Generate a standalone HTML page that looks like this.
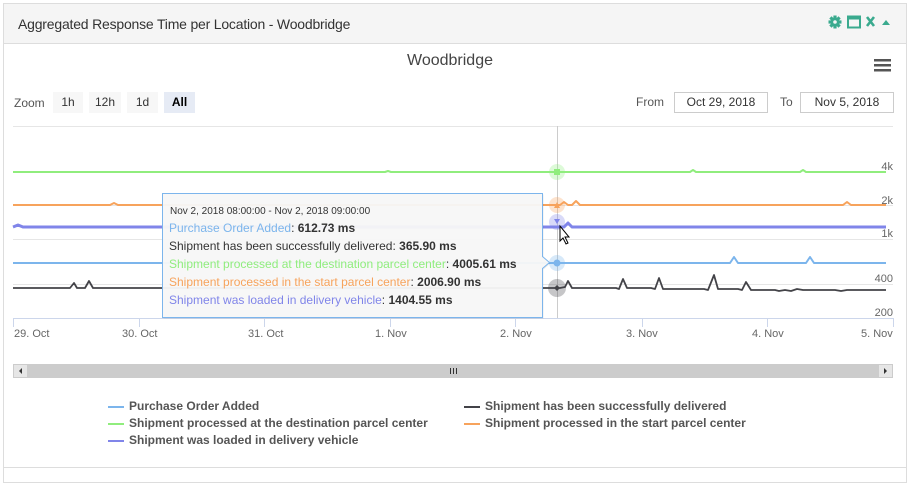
<!DOCTYPE html>
<html><head><meta charset="utf-8"><style>
*{margin:0;padding:0;box-sizing:border-box}
body{width:912px;height:472px;background:#fff;font-family:"Liberation Sans",sans-serif;position:relative;overflow:hidden}
.panel{position:absolute;left:3px;top:3px;width:904px;height:480px;border:1px solid #ddd}
.hdr{position:absolute;left:0;top:0;width:902px;height:40px;background:#f5f5f5;border-bottom:1px solid #ddd}
.hdr span{position:absolute;left:14px;top:12px;font-size:14px;color:#333;letter-spacing:-0.2px}
.t{position:absolute;white-space:nowrap}
.btn{position:absolute;top:92px;height:21px;background:#f7f7f7;font-size:12px;color:#333;text-align:center;line-height:21px}
.box{position:absolute;top:92px;height:21px;border:1px solid #ccc;font-size:12px;color:#333;text-align:center;line-height:19px}
.lg{position:absolute;font-size:12px;font-weight:bold;color:#555;white-space:nowrap}
.lg i{position:absolute;left:-21px;top:7px;width:16px;height:2px}
</style></head><body>
<div class="panel"><div class="hdr"><span>Aggregated Response Time per Location - Woodbridge</span></div></div>
<svg style="position:absolute;left:826px;top:15px" width="70" height="16">
<g fill="#3aaa8e" transform="translate(9 7)">
<rect x="-1.6" y="-6.5" width="3.2" height="13"/><rect x="-1.6" y="-6.5" width="3.2" height="13" transform="rotate(45)"/><rect x="-1.6" y="-6.5" width="3.2" height="13" transform="rotate(90)"/><rect x="-1.6" y="-6.5" width="3.2" height="13" transform="rotate(135)"/>
<circle r="4.6"/><circle r="1.8" fill="#f5f5f5"/></g>
<rect x="22" y="1.5" width="12" height="11" fill="none" stroke="#3aaa8e" stroke-width="2"/><rect x="22" y="1.5" width="12" height="3" fill="#3aaa8e"/>
<path d="M41 2l7 9M48 2l-7 9" stroke="#3aaa8e" stroke-width="2.6"/>
<path d="M56 10l4-5 4 5z" fill="#3aaa8e"/>
</svg>
<div class="t" style="left:407px;top:52px;font-size:16px;color:#444">Woodbridge</div>
<svg style="position:absolute;left:874px;top:59px" width="18" height="14"><rect y="0" width="17" height="2.5" fill="#555"/><rect y="5" width="17" height="2.5" fill="#555"/><rect y="10" width="17" height="2.5" fill="#555"/></svg>
<div class="t" style="left:14px;top:96px;font-size:12px;color:#555">Zoom</div>
<div class="btn" style="left:53px;width:30px">1h</div>
<div class="btn" style="left:89px;width:32px">12h</div>
<div class="btn" style="left:127px;width:31px">1d</div>
<div class="btn" style="left:164px;width:31px;background:#e6ebf5;font-weight:bold;color:#000">All</div>
<div class="t" style="left:636px;top:95px;font-size:12px;color:#555">From</div>
<div class="box" style="left:674px;width:94px">Oct 29, 2018</div>
<div class="t" style="left:780px;top:95px;font-size:12px;color:#555">To</div>
<div class="box" style="left:800px;width:94px">Nov 5, 2018</div>
<svg style="position:absolute;left:0;top:0" width="912" height="472" font-family="Liberation Sans, sans-serif">
<g stroke="#e6e6e6"><line x1="13" y1="126.5" x2="893" y2="126.5"/><line x1="13" y1="205.5" x2="893" y2="205.5"/><line x1="13" y1="239.5" x2="893" y2="239.5"/><line x1="13" y1="284.5" x2="893" y2="284.5"/></g>
<line x1="13" y1="318.5" x2="893" y2="318.5" stroke="#ccd6eb"/>
<g stroke="#ccd6eb"><path d="M13.5 318v9M139.5 318v9M264.5 318v9M390.5 318v9M515.5 318v9M642.5 318v9M767.5 318v9M893.5 318v9"/></g>
<line x1="557.5" y1="126" x2="557.5" y2="318" stroke="#ccc"/>
<g font-size="11" fill="#666" text-anchor="end"><text x="893" y="170">4k</text><text x="893" y="204">2k</text><text x="893" y="237">1k</text><text x="893" y="282">400</text><text x="893" y="316">200</text></g>
<g font-size="11" fill="#666"><text x="14" y="337">29. Oct</text><text x="122" y="337">30. Oct</text><text x="248" y="337">31. Oct</text><text x="375" y="337">1. Nov</text><text x="500" y="337">2. Nov</text><text x="626" y="337">3. Nov</text><text x="752" y="337">4. Nov</text><text x="861" y="337">5. Nov</text></g>
<g fill="none" stroke-linejoin="round">
<path d="M13 172H385l3-1 3 1H690l3-2 3 2H800l3-2 3 2H886" stroke="#90ed7d" stroke-width="2"/>
<path d="M13 205H110l4-2 4 2H560l4-3 4 3 4 0 4-4 4 4H843l4-3 4 3H886" stroke="#f7a35c" stroke-width="2"/>
<path d="M13 227l5-2 5 2H200l5-1 5 1H560l4 0 4-4 4 4H886" stroke="#8085e9" stroke-width="3"/>
<path d="M13 263H300l5-1 5 1H560l4 0H730l4-6 4 6H806l4-6 4 6H886" stroke="#7cb5ec" stroke-width="2"/>
<path d="M13 288H70l4-5 3 5h8l4-7 4 7H300l4-1 4 1H560l5-1 3-6 4 7H616l3 1 4-10 4 9h24l4 1 4-11 4 11H704l4 1 6-15 4 14h20l4 1 4-8 5 8h24l4 1 6-1 6 1 6-2 6 1H835l6 1 6-1H886" stroke="#434348" stroke-width="1.8"/>
</g>
<circle cx="557" cy="172" r="8" fill="#90ed7d" opacity=".3"/><rect x="554" y="169" width="6" height="6" fill="#90ed7d"/>
<circle cx="557" cy="205" r="8" fill="#f7a35c" opacity=".3"/><path d="M554 208l3-6 3 6z" fill="#f7a35c"/>
<circle cx="557" cy="222" r="8" fill="#8085e9" opacity=".3"/><path d="M554 219l3 5 3-5z" fill="#8085e9"/>
<circle cx="557" cy="263" r="8" fill="#7cb5ec" opacity=".3"/><circle cx="557" cy="263" r="3.5" fill="#7cb5ec"/>
<circle cx="557" cy="288" r="9" fill="#434348" opacity=".3"/><path d="M557 285l3 3-3 3-3-3z" fill="#434348"/>
<path d="M163.5 194.5h380v63l7 6-7 6v49h-380z" fill="#000" opacity=".08"/>
<path d="M162.5 193.5h380v63l7 6-7 6v49h-380z" fill="#f7f7f7" fill-opacity=".96" stroke="#7cb5ec"/>
<g font-size="10" fill="#333"><text x="170" y="214">Nov 2, 2018 08:00:00 - Nov 2, 2018 09:00:00</text></g>
<g font-size="12"><text x="169" y="232"><tspan fill="#7cb5ec">Purchase Order Added</tspan><tspan fill="#333">: </tspan><tspan fill="#333" font-weight="bold">612.73 ms</tspan></text>
<text x="169" y="250"><tspan fill="#333">Shipment has been successfully delivered: </tspan><tspan fill="#333" font-weight="bold">365.90 ms</tspan></text>
<text x="169" y="268"><tspan fill="#90ed7d">Shipment processed at the destination parcel center</tspan><tspan fill="#333">: </tspan><tspan fill="#333" font-weight="bold">4005.61 ms</tspan></text>
<text x="169" y="286"><tspan fill="#f7a35c">Shipment processed in the start parcel center</tspan><tspan fill="#333">: </tspan><tspan fill="#333" font-weight="bold">2006.90 ms</tspan></text>
<text x="169" y="304"><tspan fill="#8085e9">Shipment was loaded in delivery vehicle</tspan><tspan fill="#333">: </tspan><tspan fill="#333" font-weight="bold">1404.55 ms</tspan></text></g>
<path d="M560 226v15l3-3 3 6 2-1-3-6h4z" fill="#fff" stroke="#000" stroke-width="1"/>
<rect x="13" y="364" width="880" height="14" fill="#ccc"/>
<rect x="14" y="365" width="13" height="12" fill="#e6e6e6"/><path d="M22 368v6l-3-3z" fill="#333"/>
<rect x="879" y="365" width="13" height="12" fill="#e6e6e6"/><path d="M884 368v6l3-3z" fill="#333"/>
<path d="M450.5 368v6M453.5 368v6M456.5 368v6" stroke="#333"/>
<line x1="4" y1="467.5" x2="906" y2="467.5" stroke="#ddd"/>
</svg>
<div class="lg" style="left:129px;top:399px"><i style="background:#7cb5ec"></i>Purchase Order Added</div>
<div class="lg" style="left:129px;top:416px"><i style="background:#90ed7d"></i>Shipment processed at the destination parcel center</div>
<div class="lg" style="left:129px;top:433px"><i style="background:#8085e9"></i>Shipment was loaded in delivery vehicle</div>
<div class="lg" style="left:485px;top:399px"><i style="background:#434348"></i>Shipment has been successfully delivered</div>
<div class="lg" style="left:485px;top:416px"><i style="background:#f7a35c"></i>Shipment processed in the start parcel center</div>
</body></html>
